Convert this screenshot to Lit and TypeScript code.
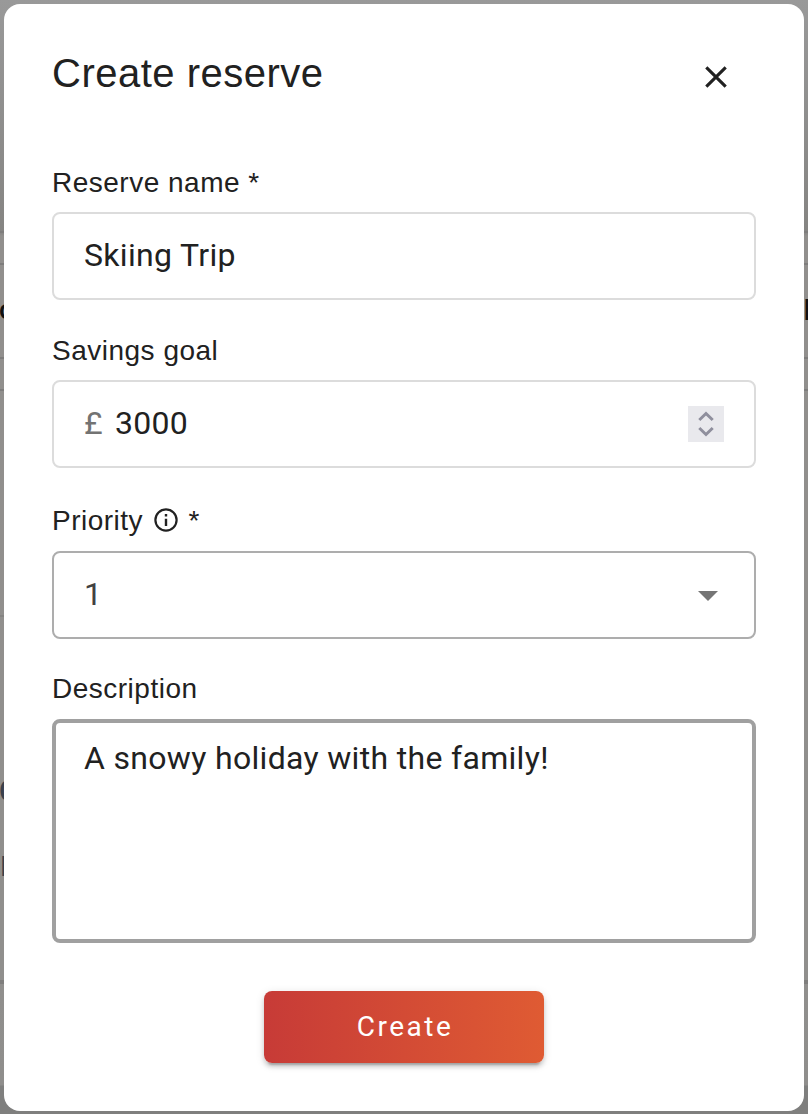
import { LitElement, html, css } from "lit";
import { customElement } from "lit/decorators.js";

@customElement("app-root")
export class AppRoot extends LitElement {
  static styles = css`
    :host {
      display: block;
      position: relative;
      box-sizing: border-box;
      height: 1114px;
      padding: 4px 4px 3px;
      overflow: hidden;
      font-family: "Liberation Sans", Arial, sans-serif;
      color: #212121;
      background: linear-gradient(#999 0, #858482 232px, #918f8d 236px, #908f8d 985px, #8f8e8c 1085px, #7f7f7e 1086px);
    }
    * { box-sizing: border-box; }
    .line { position: absolute; left: 0; right: 0; height: 2px; background: #7e7d7c; }
    .l1 { top: 231px; }
    .l2 { top: 263px; }
    .l3 { top: 357px; }
    .l4 { top: 389px; }
    .l5 { top: 980px; height: 4px; background: #7f7e7d; }
    .l6 { top: 615px; right: auto; width: 4px; background: #858482; }
    .peek { position: absolute; font: 28px/32px Roboto, sans-serif; color: #111; }
    .p1 { left: -1px; top: 294px; font-weight: 500; }
    .p2 { left: -1px; top: 775px; font-size: 29px; font-weight: 500; color: #3a414c; }
    .p3 { left: 0; top: 851px; font-size: 28px; color: #3a414c; }
    .p4 { left: 803px; top: 294px; font-size: 30px; }
    .dialog {
      position: relative;
      height: 1107px;
      padding: 48px 48px 0;
      background: #fff;
      border-radius: 16px;
      display: flex;
      flex-direction: column;
    }
    .head {
      display: flex;
      justify-content: space-between;
      height: 112px;
      padding-right: 28px;
    }
    h1 { margin: 0; font-size: 40px; font-weight: 400; line-height: 42px; letter-spacing: 0.5px; }
    .close { padding: 0; border: 0; background: none; width: 24px; height: 24px; margin-top: 12.5px; }
    svg { display: block; }
    .label {
      display: flex;
      align-items: center;
      height: 36px;
      padding-top: 2px;
      margin-bottom: 12px;
      font-size: 28px;
      line-height: 36px;
      letter-spacing: 0.5px;
      white-space: pre;
    }
    .priority .label, .description .label { margin-bottom: 13px; }
    .savings { margin-top: 32px; }
    .priority { margin-top: 34px; }
    .description { margin-top: 31px; }
    .info { margin: -2px 2px 0 11px; }
    .box {
      display: flex;
      align-items: center;
      height: 88px;
      padding: 0 30px 2px;
      border: 2px solid #dcdcdc;
      border-radius: 8px;
      font: 32px/38px Roboto, sans-serif;
      letter-spacing: 0.32px;
    }
    .select { border-color: #adadad; color: #414141; justify-content: space-between; padding-right: 36px; }
    input, textarea {
      flex: 1;
      min-width: 0;
      margin: 0;
      padding: 0;
      border: 0;
      outline: 0;
      background: none;
      color: #212121;
      font: inherit;
      letter-spacing: inherit;
      resize: none;
    }
    .currency { color: #737373; margin-right: 12px; }
    .spin { width: 36px; height: 36px; margin-top: 2px; background: #e9e9ed; }
    .area { height: 224px; border: 4px solid #a0a0a0; padding: 16px 28px; align-items: stretch; }
    .arrow { margin-top: 3px; }
    .create {
      align-self: center;
      width: 280px;
      height: 72px;
      margin-top: 48px;
      padding: 0 0 0 2px;
      border: 0;
      border-radius: 8px;
      color: #fff;
      font: 28px/36px Roboto, sans-serif;
      letter-spacing: 2.5px;
      background: linear-gradient(90deg, #c73b37, #df5b33);
      box-shadow: 0 6px 2px -4px rgba(0, 0, 0, 0.2), 0 4px 4px rgba(0, 0, 0, 0.14), 0 2px 10px rgba(0, 0, 0, 0.12);
    }
  `;

  render() {
    return html`
      <div class="line l1"></div>
      <div class="line l2"></div>
      <div class="line l3"></div>
      <div class="line l4"></div>
      <div class="line l5"></div>
      <div class="line l6"></div>
      <span class="peek p1">o</span>
      <span class="peek p2">C</span>
      <span class="peek p3">E</span>
      <span class="peek p4">E</span>
      <div class="dialog" role="dialog">
        <div class="head">
          <h1>Create reserve</h1>
          <button class="close" aria-label="Close">
            <svg width="24" height="24" viewBox="0 0 24 24" fill="none" stroke="#212121" stroke-width="3.1">
              <path d="M2.3 2.3 21.7 21.7M21.7 2.3 2.3 21.7" />
            </svg>
          </button>
        </div>
        <div class="field">
          <div class="label">Reserve name *</div>
          <div class="box"><input value="Skiing Trip" /></div>
        </div>
        <div class="field savings">
          <div class="label">Savings goal</div>
          <div class="box">
            <span class="currency">£</span>
            <input value="3000" />
            <svg class="spin" viewBox="0 0 36 36" fill="none" stroke="#8f8f9d" stroke-width="3">
              <path d="M11.3 14 18 7.5 24.7 14M11.3 22 18 28.5 24.7 22" />
            </svg>
          </div>
        </div>
        <div class="field priority">
          <div class="label"><span>Priority</span><svg class="info" width="24" height="24" viewBox="0 0 24 24" fill="none" stroke="#212121">
              <circle cx="12" cy="12" r="10.6" stroke-width="2.2" />
              <path d="M12 10.8V18M12 6V8.4" stroke-width="2.4" />
            </svg><span> *</span></div>
          <div class="box select">
            <span>1</span>
            <svg class="arrow" width="20" height="10" viewBox="0 0 20 10" fill="#757575"><path d="M0 0H20L10 10Z" /></svg>
          </div>
        </div>
        <div class="field description">
          <div class="label">Description</div>
          <div class="box area"><textarea>A snowy holiday with the family!</textarea></div>
        </div>
        <button class="create">Create</button>
      </div>
    `;
  }
}
